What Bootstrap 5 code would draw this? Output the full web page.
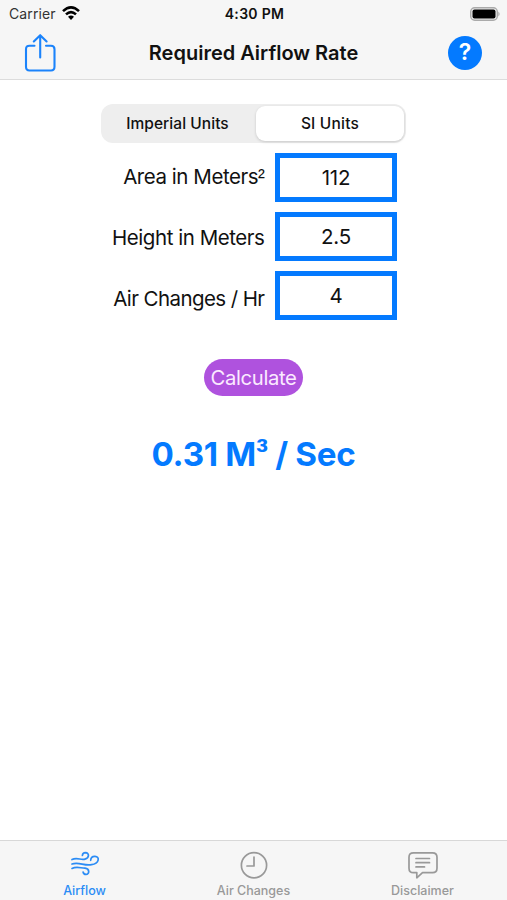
<!DOCTYPE html>
<html lang="en">
<head>
<meta charset="utf-8">
<meta name="viewport" content="width=device-width, initial-scale=1">
<title>Required Airflow Rate</title>
<link href="https://cdn.jsdelivr.net/npm/bootstrap@5.3.0/dist/css/bootstrap.min.css" rel="stylesheet">
<style>
:root { --ios-blue: #047aff; --ios-bar: #f6f6f6; --ios-gray: #999; }
body { font-family: Inter, "Liberation Sans", sans-serif; color: #111; line-height: 1.2; }
.screen { height: 900px; overflow: hidden; }
.top-bar { background: var(--ios-bar); height: 80px; border-bottom: 1px solid #dcdcdc; }
.status { height: 27px; padding: 1px 7px 0 9px; font-size: 14px; }
.status > *, .title-row > * { flex: 1 1 0; }
.carrier { letter-spacing: .1px; color: #333; margin-right: 6px; }
.wifi { margin-bottom: 2px; }
.clock { font-weight: 600; font-size: 14px; letter-spacing: .3px; }
.title-row { height: 51px; padding: 0 25px 0 24px; }
.title-row h1 { flex: 0 0 auto; font-size: 20px; font-weight: 600; letter-spacing: 0; padding-left: 1px; }
.help { width: 34px; height: 34px; background: var(--ios-blue); font-size: 23px; font-weight: 600; padding-top: 1px; }
.segments { width: 305px; height: 39px; margin-top: 24px; padding: 2px; border-radius: 12px; background: #eee; font-size: 15.5px; font-weight: 500; }
.segments .seg { color: #111; border: 0; padding: 2px 0 0; font: inherit; border-radius: 9px; }
.segments .seg:first-child { width: 153px; letter-spacing: .05px; padding-right: 4px; }
.segments .seg.active { background: #fff; box-shadow: 0 1px 3px rgba(0,0,0,.16); letter-spacing: .2px; }
.fields { width: 305px; margin-top: 10px; row-gap: 10px; padding-right: 9px; }
.fields label { font-size: 20.5px; width: 163.5px; letter-spacing: -.45px; white-space: nowrap; position: relative; top: 1.5px; }
.fields .tight { letter-spacing: -.58px; }
.fields input { width: 122px; height: 49px; border: 5px solid var(--ios-blue); border-radius: 0; padding: 0; font-size: 20.5px; color: #111; text-align: center; letter-spacing: -.2px; }
.power { font-family: "Liberation Sans", sans-serif; line-height: 1; }
.result .power { position: relative; top: -2px; font-size: 36px; }
.calc { margin-top: 39px; width: 99px; height: 37px; background: #af52de; color: #fbeaff; font-size: 20.3px; letter-spacing: -.35px; padding: 1px 0 0; }
.result { margin-top: 38px; font-size: 33.2px; line-height: 40px; font-weight: 700; letter-spacing: -.3px; color: var(--ios-blue); white-space: nowrap; }
.tabs { height: 60px; background: var(--ios-bar); border-top: 1px solid #d8d8d8; font-size: 12.5px; font-weight: 500; }
.tabs a { color: var(--ios-gray); text-decoration: none; padding-top: 7px; }
.tabs a.active { color: #2b8cf5; }
.tabs svg { margin-bottom: 3px; }
svg { display: block; overflow: visible; }
</style>
</head>
<body class="bg-white">
<div class="screen d-flex flex-column">
  <header class="top-bar flex-shrink-0">
    <div class="status d-flex align-items-center">
      <div class="d-flex align-items-center"><span class="carrier">Carrier</span>
        <svg class="wifi" width="18" height="14" viewBox="0 0 18 14" fill="none" stroke="#000" stroke-width="2.6"><path d="M1 5.1Q9-2.5 17 5.1M4 8.4Q9 3.8 14 8.4"/><path d="M9 14 6 10.8Q9 8.4 12 10.8Z" fill="#000" stroke="none"/></svg>
      </div>
      <div class="clock text-center">4:30 PM</div>
      <div class="d-flex justify-content-end">
        <svg width="30" height="14" viewBox="0 0 30 14"><rect x=".7" y=".7" width="26.6" height="12.6" rx="4" fill="#eee" stroke="#aaa" stroke-width="1.4"/><rect x="2.5" y="2.5" width="23" height="9" rx="2" fill="#000"/><path d="M28.3 4.5Q31 7 28.3 9.5Z" fill="#aaa"/></svg>
      </div>
    </div>
    <div class="title-row d-flex align-items-center">
      <div><svg width="32" height="38" viewBox="0 0 32 38" fill="none" stroke="#1b83fb" stroke-width="2.1" stroke-linecap="round" stroke-linejoin="round"><path d="M10.5 11.7H5.5Q2 11.7 2 15.2V32.8Q2 36.5 5.5 36.5H27Q30.5 36.5 30.5 32.8V15.2Q30.5 11.7 27 11.7H22M16.2 23.5V1.2M9.8 7.5 16.2 1.2 22.6 7.5"/></svg></div>
      <h1 class="m-0">Required Airflow Rate</h1>
      <div class="d-flex justify-content-end"><span class="help rounded-circle text-white d-flex align-items-center justify-content-center">?</span></div>
    </div>
  </header>

  <main class="flex-grow-1 d-flex flex-column align-items-center">
    <div class="segments d-flex" role="group">
      <button class="seg btn">Imperial Units</button>
      <button class="seg btn active flex-grow-1">SI Units</button>
    </div>
    <form class="fields d-flex flex-column">
      <div class="d-flex align-items-center justify-content-between"><label class="text-end pb-1" for="area">Area in Meters<span class="power">²</span></label><input id="area" class="form-control" value="112"></div>
      <div class="d-flex align-items-center justify-content-between"><label class="text-end" for="height">Height in Meters</label><input id="height" class="form-control" value="2.5"></div>
      <div class="d-flex align-items-center justify-content-between"><label class="tight text-end pt-1" for="changes">Air Changes / Hr</label><input id="changes" class="form-control" value="4"></div>
    </form>
    <button class="calc btn rounded-pill border-0">Calculate</button>
    <div class="result">0.31 M<span class="power">³</span> / Sec</div>
  </main>

  <nav class="tabs d-flex flex-shrink-0">
    <a href="#" class="active col-4 d-flex flex-column align-items-center">
      <svg width="30" height="32" viewBox="0 0 30 32" fill="none" stroke="currentColor" stroke-width="1.7" stroke-linecap="round"><path d="M2 11.5C7 9 11 12.4 15 11.1 19.5 9.8 19.5 4.8 15.5 4.7 13.6 4.7 12.5 5.8 12.4 7.5M2 16C9 13.5 14 18.2 21.5 16.7 29.5 15.5 30 8.5 25 8.3 22.3 8.2 20.8 10 20.7 12.3M2 20.4C7 18 11 20.3 15 20.2 20 20.6 19.5 26.4 16 26.4 14.3 26.4 13.3 25.3 13.1 24"/></svg>
      <span>Airflow</span>
    </a>
    <a href="#" class="col-4 d-flex flex-column align-items-center">
      <svg width="30" height="32" viewBox="0 0 30 32" fill="none" stroke="currentColor" stroke-width="1.7" stroke-linecap="round" stroke-linejoin="round"><circle cx="15" cy="17.3" r="12.6"/><path d="M15 9V18H8"/></svg>
      <span>Air Changes</span>
    </a>
    <a href="#" class="col-4 d-flex flex-column align-items-center">
      <svg width="30" height="32" viewBox="0 0 30 32" fill="none" stroke="currentColor" stroke-width="1.7" stroke-linecap="round" stroke-linejoin="round"><path d="M5.5 4.8H24.5Q29 4.8 29 9.2V20.2Q29 24.6 24.5 24.6H14.5L8.8 29.8V24.6H5.5Q1 24.6 1 20.2V9.2Q1 4.8 5.5 4.8Z"/><path d="M8 10.5H21.5M8 14.7H21.5M8 18.9H16.5"/></svg>
      <span>Disclaimer</span>
    </a>
  </nav>
</div>
<script src="https://cdn.jsdelivr.net/npm/bootstrap@5.3.0/dist/js/bootstrap.bundle.min.js"></script>
</body>
</html>
